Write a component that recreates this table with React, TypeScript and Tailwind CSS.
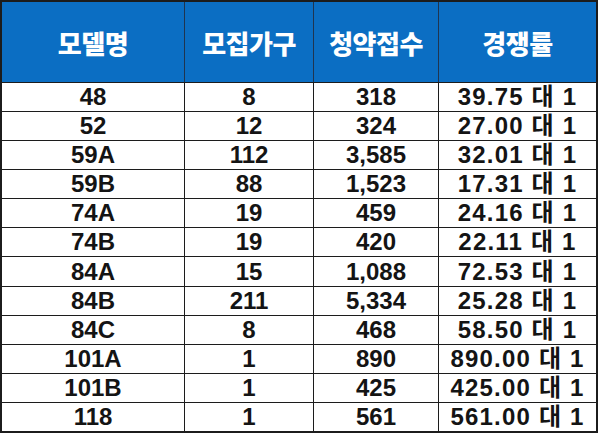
const rows: [string, string, string, string][] = [
  ["48", "8", "318", "39.75 대 1"],
  ["52", "12", "324", "27.00 대 1"],
  ["59A", "112", "3,585", "32.01 대 1"],
  ["59B", "88", "1,523", "17.31 대 1"],
  ["74A", "19", "459", "24.16 대 1"],
  ["74B", "19", "420", "22.11 대 1"],
  ["84A", "15", "1,088", "72.53 대 1"],
  ["84B", "211", "5,334", "25.28 대 1"],
  ["84C", "8", "468", "58.50 대 1"],
  ["101A", "1", "890", "890.00 대 1"],
  ["101B", "1", "425", "425.00 대 1"],
  ["118", "1", "561", "561.00 대 1"],
];

const headers = ["모델명", "모집가구", "청약접수", "경쟁률"];
const widths = ["w-[183px]", "w-[129px]", "w-[125px]", "flex-1"];

export default function App() {
  return (
    <div className="w-[600px] h-[435px] bg-white">
      <div className="w-[598px] h-[433px] border-2 border-[#1c1c1c] flex flex-col">
        <div className="h-[81px] shrink-0 flex bg-[#0b6ec3] border-b border-[#1c1c1c]">
          {headers.map((h, i) => (
            <div
              key={h}
              className={`${widths[i]} flex items-center justify-center text-white font-black text-[26px] tracking-[-0.5px] ${i < 3 ? "border-r border-[#1f3550]" : ""}`}
              style={{ fontFamily: '"Noto Sans CJK KR", "Liberation Sans", sans-serif' }}
            >
              {h}
            </div>
          ))}
        </div>
        {rows.map((r, ri) => (
          <div
            key={r[0]}
            className={`flex-1 flex ${ri < rows.length - 1 ? "border-b border-[#1c1c1c]" : ""}`}
          >
            {r.map((c, i) => (
              <div
                key={i}
                className={`${widths[i]} flex items-center justify-center text-[#141414] font-bold text-[24px] leading-none ${i < 3 ? "border-r border-[#1c1c1c]" : ""} ${i === 3 ? "tracking-[1.2px]" : ""}`}
                style={{ fontFamily: '"Liberation Sans", "Noto Sans CJK KR", sans-serif' }}
              >
                {c}
              </div>
            ))}
          </div>
        ))}
      </div>
    </div>
  );
}
